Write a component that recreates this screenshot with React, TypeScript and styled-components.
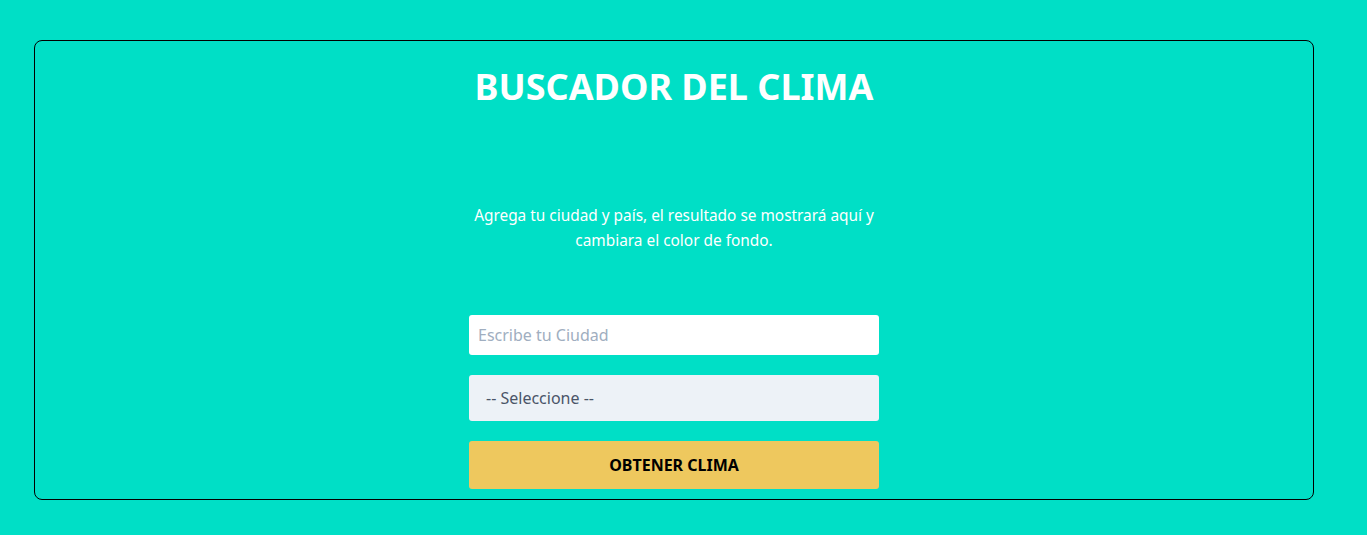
import React from "react";
import styled, { createGlobalStyle } from "styled-components";

const Global = createGlobalStyle`
  html, body { margin: 0; padding: 0; }
  body {
    background: #00dfc6;
    font-family: "Noto Sans", "Open Sans", sans-serif;
    color: #ffffff;
  }
  * { box-sizing: border-box; }
`;

const Page = styled.div`
  padding: 40px 0 0 34px;
  display: flex;
`;

const Card = styled.main`
  width: 1280px;
  height: 460px;
  border: 1px solid #000;
  border-radius: 8px;
  display: flex;
  flex-direction: column;
  align-items: center;
  overflow: hidden;
`;

const Title = styled.h1`
  margin: 26px 0 0;
  font-size: 36px;
  line-height: 40px;
  font-weight: 700;
  color: #fff;
`;

const Intro = styled.p`
  margin: 96px 0 0;
  width: 430px;
  text-align: center;
  font-size: 15.4px;
  line-height: 25px;
`;

const Form = styled.form`
  margin-top: 62px;
  width: 410px;
  display: flex;
  flex-direction: column;
  gap: 20px;
`;

const Input = styled.input`
  height: 40px;
  border: none;
  border-radius: 3px;
  background: #fff;
  padding: 0 9px;
  font-family: inherit;
  font-size: 16px;
  color: #4a5568;
  outline: none;
  &::placeholder { color: #a0aec0; }
`;

const Select = styled.div`
  height: 46px;
  border-radius: 3px;
  background: #edf2f7;
  padding: 0 17px;
  display: flex;
  align-items: center;
  font-size: 16px;
  color: #4a5568;
`;

const Button = styled.button`
  height: 48px;
  border: none;
  border-radius: 3px;
  background: #eec85e;
  font-family: inherit;
  font-size: 16px;
  font-weight: 700;
  color: #000;
  text-transform: uppercase;
`;

export default function App() {
  return (
    <>
      <Global />
      <Page>
        <Card>
          <Title>BUSCADOR DEL CLIMA</Title>
          <Intro>
            Agrega tu ciudad y país, el resultado se mostrará aquí y cambiara el color de fondo.
          </Intro>
          <Form onSubmit={(e) => e.preventDefault()}>
            <Input type="text" placeholder="Escribe tu Ciudad" />
            <Select>-- Seleccione --</Select>
            <Button type="submit">Obtener Clima</Button>
          </Form>
        </Card>
      </Page>
    </>
  );
}
